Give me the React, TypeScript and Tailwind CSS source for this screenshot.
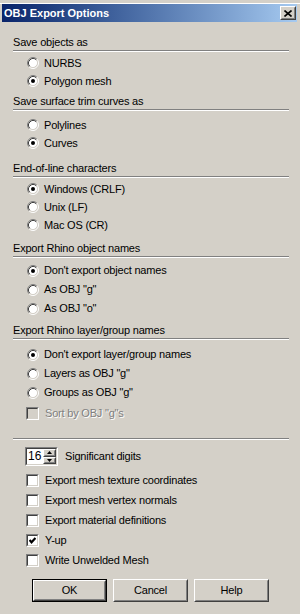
import type { ReactNode } from "react";

function RadioDot({ checked }: { checked?: boolean }) {
  return (
    <svg width="12" height="12" viewBox="0 0 12 12" className="shrink-0">
      <circle cx="6" cy="6" r="4.5" fill="#ffffff" />
      <path d="M2.11 9.89 A5.5 5.5 0 0 1 9.89 2.11" fill="none" stroke="#808080" />
      <path d="M9.89 2.11 A5.5 5.5 0 0 1 2.11 9.89" fill="none" stroke="#ffffff" />
      <path d="M2.82 9.18 A4.5 4.5 0 0 1 9.18 2.82" fill="none" stroke="#404040" />
      <path d="M9.18 2.82 A4.5 4.5 0 0 1 2.82 9.18" fill="none" stroke="#d4d0c8" />
      {checked && <circle cx="6" cy="6" r="2" fill="#000000" />}
    </svg>
  );
}

function RadioRow({ label, checked, tall }: { label: string; checked?: boolean; tall?: boolean }) {
  return (
    <div className={`flex items-center gap-[5px] pl-[14px] ${tall ? "h-[19px]" : "h-[18px]"}`}>
      <RadioDot checked={checked} />
      <span>{label}</span>
    </div>
  );
}

function CheckBox({ checked, disabled }: { checked?: boolean; disabled?: boolean }) {
  return (
    <div className="h-[13px] w-[13px] shrink-0 border border-t-[#808080] border-l-[#808080] border-r-white border-b-white">
      <div
        className={`flex h-full w-full items-center justify-center border border-t-[#404040] border-l-[#404040] border-r-[#d4d0c8] border-b-[#d4d0c8] ${
          disabled ? "bg-[#d4d0c8]" : "bg-white"
        }`}
      >
        {checked && (
          <svg width="7" height="7" viewBox="0 0 7 7">
            <path d="M0.5 3 L2.5 5.3 L6.5 1" fill="none" stroke="#000000" strokeWidth="2.2" />
          </svg>
        )}
      </div>
    </div>
  );
}

function CheckRow({ label, checked, disabled, tall }: { label: string; checked?: boolean; disabled?: boolean; tall?: boolean }) {
  return (
    <div className={`flex items-center gap-[6px] pl-[13px] ${tall ? "h-[20px]" : "h-[18px]"}`}>
      <CheckBox checked={checked} disabled={disabled} />
      <span className={disabled ? "text-[#808080] [text-shadow:1px_1px_0_#ffffff]" : ""}>{label}</span>
    </div>
  );
}

function Sep() {
  return <div className="h-[2px] border-t border-b border-t-[#808080] border-b-white" />;
}

function Header({ title, className }: { title: string; className: string }) {
  return (
    <div className={className}>
      <div className="flex h-[16px] items-center">{title}</div>
      <Sep />
    </div>
  );
}

function Bevel({ children, className }: { children: ReactNode; className?: string }) {
  return (
    <div className={`border border-t-white border-l-white border-r-[#404040] border-b-[#404040] bg-[#d4d0c8] ${className ?? ""}`}>
      <div className="flex h-full w-full items-center justify-center border border-t-[#d4d0c8] border-l-[#d4d0c8] border-r-[#808080] border-b-[#808080]">
        {children}
      </div>
    </div>
  );
}

function Btn({ label, isDefault }: { label: string; isDefault?: boolean }) {
  return (
    <div className={`h-[23px] w-[75px] ${isDefault ? "border border-black" : ""}`}>
      <Bevel className="h-full w-full">{label}</Bevel>
    </div>
  );
}

export default function App() {
  return (
    <div className="h-[614px] w-[300px] overflow-hidden bg-[#d4d0c8] font-['Liberation_Sans',Arial,sans-serif] text-[11px] tracking-[-0.2px] text-black">
      {/* strip of the window behind */}
      <div className="h-[4px] border-b border-b-white bg-[#d4d0c8]" />

      {/* title bar */}
      <div className="ml-[2px] mr-[3px] flex h-[18px] items-center justify-between bg-gradient-to-r from-[#0a246a] to-[#a6caf0] pl-[2px] pr-[1px]">
        <span className="text-[11px] font-bold tracking-normal text-white">OBJ Export Options</span>
        <Bevel className="h-[14px] w-[16px]">
          <svg width="8" height="7" viewBox="0 0 8 7">
            <path d="M0.5 0.5 L7.5 6.5 M7.5 0.5 L0.5 6.5" stroke="#000000" strokeWidth="1.6" />
          </svg>
        </Bevel>
      </div>

      <div className="pl-[13px] pr-[11px]">
        <Header title="Save objects as" className="mt-[12px]" />
        <div className="mt-[2px]">
          <RadioRow label="NURBS" />
          <RadioRow label="Polygon mesh" checked />
        </div>

        <Header title="Save surface trim curves as" className="mt-[3px]" />
        <div className="mt-[5px]">
          <RadioRow label="Polylines" />
          <RadioRow label="Curves" checked />
        </div>

        <Header title="End-of-line characters" className="mt-[8px]" />
        <div className="mt-[2px]">
          <RadioRow label="Windows (CRLF)" checked />
          <RadioRow label="Unix (LF)" />
          <RadioRow label="Mac OS (CR)" />
        </div>

        <Header title="Export Rhino object names" className="mt-[6px]" />
        <div className="mt-[3px]">
          <RadioRow label="Don't export object names" checked tall />
          <RadioRow label='As OBJ "g"' tall />
          <RadioRow label='As OBJ "o"' tall />
        </div>

        <Header title="Export Rhino layer/group names" className="mt-[4px]" />
        <div className="mt-[5px]">
          <RadioRow label="Don't export layer/group names" checked tall />
          <RadioRow label='Layers as OBJ "g"' tall />
          <RadioRow label='Groups as OBJ "g"' tall />
        </div>
        <div className="mt-[2px]">
          <CheckRow label={'Sort by OBJ "g"s'} disabled />
        </div>

        <div className="mt-[16px]">
          <Sep />
        </div>

        {/* significant digits spinner */}
        <div className="mt-[7px] flex h-[19px] items-center gap-[7px] pl-[12px]">
          <div className="flex h-[19px] w-[33px] border border-t-[#808080] border-l-[#808080] border-r-white border-b-white">
            <div className="flex flex-1 border border-t-[#404040] border-l-[#404040] border-r-[#d4d0c8] border-b-[#d4d0c8] bg-white">
              <span className="flex-1 pl-[1px] text-[12px] leading-[15px] tracking-normal">16</span>
              <div className="flex w-[13px] flex-col">
                <Bevel className="h-1/2 w-full">
                  <svg width="5" height="3" viewBox="0 0 5 3">
                    <path d="M2.5 0 L5 3 L0 3 Z" fill="#000000" />
                  </svg>
                </Bevel>
                <Bevel className="h-1/2 w-full">
                  <svg width="5" height="3" viewBox="0 0 5 3">
                    <path d="M0 0 L5 0 L2.5 3 Z" fill="#000000" />
                  </svg>
                </Bevel>
              </div>
            </div>
          </div>
          <span>Significant digits</span>
        </div>

        <div className="mt-[4px]">
          <CheckRow label="Export mesh texture coordinates" tall />
          <CheckRow label="Export mesh vertex normals" tall />
          <CheckRow label="Export material definitions" tall />
          <CheckRow label="Y-up" checked tall />
          <CheckRow label="Write Unwelded Mesh" tall />
        </div>
      </div>

      <div className="mt-[9px] flex gap-[6px] pl-[32px]">
        <Btn label="OK" isDefault />
        <Btn label="Cancel" />
        <Btn label="Help" />
      </div>
    </div>
  );
}
